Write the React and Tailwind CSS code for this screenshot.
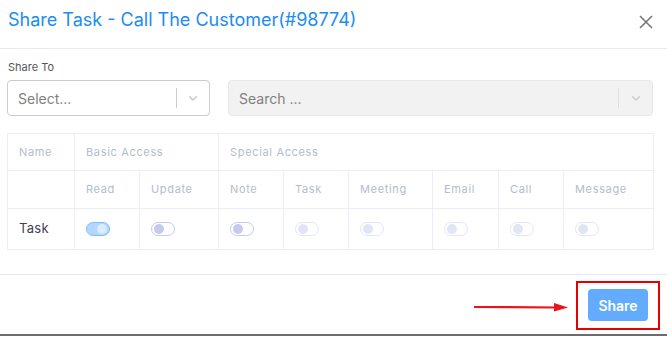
import React from "react";

function Chevron({ className }) {
  return (
    <svg width="14" height="14" viewBox="0 0 20 20" className={className} fill="currentColor">
      <path d="M4.516 7.548c0.436-0.446 1.043-0.481 1.576 0l3.908 3.747 3.908-3.747c0.533-0.481 1.141-0.446 1.574 0 0.436 0.445 0.408 1.197 0 1.615-0.406 0.418-4.695 4.502-4.695 4.502-0.217 0.223-0.502 0.335-0.787 0.335s-0.57-0.112-0.789-0.335c0 0-4.287-4.084-4.695-4.502s-0.436-1.170 0-1.615z" />
    </svg>
  );
}

function Toggle({ on, disabled }) {
  if (on) {
    return (
      <div className="w-[24px] h-[14px] rounded-full bg-[#b3d7ff] border border-[#80bdff] flex items-center justify-end pr-[2px]">
        <div className="w-[10px] h-[10px] rounded-full bg-[#dcecff]" />
      </div>
    );
  }
  return (
    <div
      className={
        "w-[24px] h-[14px] rounded-full bg-white border flex items-center pl-[2px] " +
        (disabled ? "border-[#e3e6f5]" : "border-[#c5cbee]")
      }
    >
      <div className={"w-[10px] h-[10px] rounded-full " + (disabled ? "bg-[#e2e5f6]" : "bg-[#c5cbed]")} />
    </div>
  );
}

export default function App() {
  const cols = [
    { name: "Read", on: true },
    { name: "Update" },
    { name: "Note" },
    { name: "Task", disabled: true },
    { name: "Meeting", disabled: true },
    { name: "Email", disabled: true },
    { name: "Call", disabled: true },
    { name: "Message", disabled: true },
  ];
  const th = "border border-[#ebedf8] text-left font-normal text-[11px] tracking-[0.06em] text-[#b5bccb] pl-[11px] align-middle";
  return (
    <div className="w-[667px] h-[337px] bg-white overflow-hidden relative" style={{ fontFamily: "Inter, 'Noto Sans', sans-serif" }}>
      <div className="flex flex-col h-[336px] border-b-2 border-[#6c6c6c]">
        {/* Header */}
        <div className="h-[49px] shrink-0 border-b border-[#e2e7fa] flex items-center justify-between pl-[8px] pr-[14px]">
          <div className="text-[18px] text-[#1a8cf5] leading-none pb-[8px]">Share Task - Call The Customer(#98774)</div>
          <svg width="14" height="14" viewBox="0 0 14 14" className="mb-[5px]">
            <path d="M1 1 L13 13 M13 1 L1 13" stroke="#777" strokeWidth="1.6" />
          </svg>
        </div>
        {/* Body */}
        <div className="h-[226px] shrink-0 border-b border-[#e2e7fa] pl-[7px] pr-[14px] pt-[13px]">
          <div className="text-[11px] text-[#555] leading-none pl-[1px]">Share To</div>
          <div className="flex mt-[7px] gap-[18px]">
            <div className="w-[203px] h-[36px] border border-[#ccc] rounded-[4px] flex items-center">
              <div className="flex-1 pl-[10px] text-[14px] text-[#808080]">Select...</div>
              <div className="w-px h-[20px] bg-[#ccc]" />
              <div className="w-[32px] flex justify-center text-[#ccc]"><Chevron /></div>
            </div>
            <div className="flex-1 h-[36px] border border-[#e6e6e6] bg-[#f2f2f2] rounded-[4px] flex items-center">
              <div className="flex-1 pl-[10px] text-[14px] text-[#808080]">Search ...</div>
              <div className="w-px h-[20px] bg-[#e0e0e0]" />
              <div className="w-[33px] flex justify-center text-[#d0d0d0]"><Chevron /></div>
            </div>
          </div>
          <table className="mt-[17px] border-collapse table-fixed w-[646px]">
            <colgroup>
              <col className="w-[67px]" />
              <col className="w-[65px]" />
              <col className="w-[79px]" />
              <col className="w-[65px]" />
              <col className="w-[65px]" />
              <col className="w-[84px]" />
              <col className="w-[66px]" />
              <col className="w-[65px]" />
              <col className="w-[90px]" />
            </colgroup>
            <thead>
              <tr className="h-[37px]">
                <th className={th}>Name</th>
                <th className={th} colSpan={2}>Basic Access</th>
                <th className={th} colSpan={6}>Special Access</th>
              </tr>
              <tr className="h-[38px]">
                <th className={th}></th>
                {cols.map((c) => (
                  <th key={c.name} className={th}>{c.name}</th>
                ))}
              </tr>
            </thead>
            <tbody>
              <tr className="h-[41px]">
                <td className="border border-[#ebedf8] pl-[11px] text-[13px] text-[#3f4254] tracking-[0.02em]">Task</td>
                {cols.map((c) => (
                  <td key={c.name} className="border border-[#ebedf8] pl-[11px]">
                    <Toggle on={c.on} disabled={c.disabled} />
                  </td>
                ))}
              </tr>
            </tbody>
          </table>
        </div>
        {/* Footer */}
        <div className="flex-1 flex items-center justify-end pr-[7px] pt-[1px]">
          <svg width="96" height="12" viewBox="0 0 96 12" className="mr-[6px] mt-[4px]">
            <path d="M0 6 L82 6.5" stroke="#e8141b" strokeWidth="2.2" />
            <path d="M80 2 L94 6.5 L80 10.5 Z" fill="#e8141b" />
          </svg>
          <div className="border-2 border-[#e60000] w-[84px] h-[49px] flex items-center justify-center">
            <div className="w-[60px] h-[32px] rounded-[4px] bg-[#62abfd] text-white text-[14px] font-semibold flex items-center justify-center">
              Share
            </div>
          </div>
        </div>
      </div>
    </div>
  );
}
